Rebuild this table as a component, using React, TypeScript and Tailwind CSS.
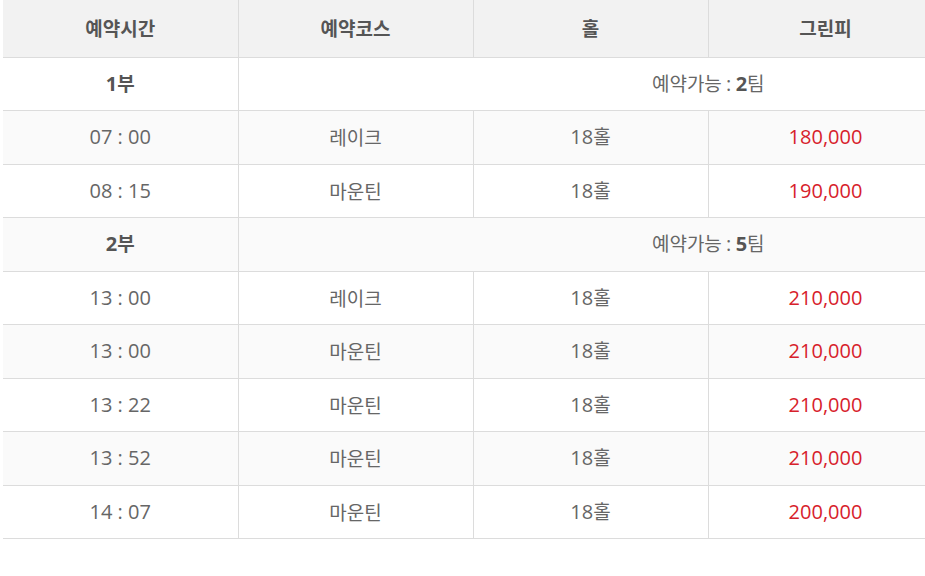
const rows: Array<
  | { kind: 'part'; label: string; teams: number }
  | { kind: 'slot'; time: string; course: string; hole: string; fee: string }
> = [
  { kind: 'part', label: '1', teams: 2 },
  { kind: 'slot', time: '07 : 00', course: '레이크', hole: '18', fee: '180,000' },
  { kind: 'slot', time: '08 : 15', course: '마운틴', hole: '18', fee: '190,000' },
  { kind: 'part', label: '2', teams: 5 },
  { kind: 'slot', time: '13 : 00', course: '레이크', hole: '18', fee: '210,000' },
  { kind: 'slot', time: '13 : 00', course: '마운틴', hole: '18', fee: '210,000' },
  { kind: 'slot', time: '13 : 22', course: '마운틴', hole: '18', fee: '210,000' },
  { kind: 'slot', time: '13 : 52', course: '마운틴', hole: '18', fee: '210,000' },
  { kind: 'slot', time: '14 : 07', course: '마운틴', hole: '18', fee: '200,000' },
];

// digits in the reference are set larger than the hangul
const num = "font-['Open_Sans',sans-serif] text-[20px]";

export default function App() {
  return (
    <div className="w-[925px] h-[576px] overflow-hidden bg-white font-['Noto_Sans_CJK_KR','Noto_Sans',sans-serif] text-[19px]">
      <table className="ml-[3px] w-[1175px] table-fixed border-collapse">
        <colgroup>
          <col className="w-[235px]" />
          <col className="w-[235px]" />
          <col className="w-[235px]" />
          <col className="w-[235px]" />
          <col className="w-[235px]" />
        </colgroup>
        <thead>
          <tr className="h-[57px] bg-[#f2f2f2] border-b border-[#dcdcdc]">
            {['예약시간', '예약코스', '홀', '그린피', ''].map((h, i) => (
              <th
                key={i}
                className={`font-bold text-[#555] text-center ${i > 0 ? 'border-l border-[#dcdcdc]' : ''}`}
              >
                {h}
              </th>
            ))}
          </tr>
        </thead>
        <tbody>
          {rows.map((r, i) => {
            const bg = i % 2 === 1 ? 'bg-[#fafafa]' : 'bg-white';
            if (r.kind === 'part') {
              return (
                <tr key={i} className={`h-[53.5px] border-b border-[#dcdcdc] ${bg}`}>
                  <td className="text-center font-bold text-[#555]">
                    <span className={num}>{r.label}</span>부
                  </td>
                  <td colSpan={4} className="text-center text-[#666] border-l border-[#dcdcdc]">
                    예약가능 <span className={num}>:</span>{' '}
                    <span className={`${num} font-bold text-[#555]`}>{r.teams}</span>팀
                  </td>
                </tr>
              );
            }
            return (
              <tr key={i} className={`h-[53.5px] border-b border-[#dcdcdc] ${bg}`}>
                <td className={`text-center text-[#666] ${num}`}>{r.time}</td>
                <td className="text-center text-[#666] border-l border-[#dcdcdc]">{r.course}</td>
                <td className="text-center text-[#666] border-l border-[#dcdcdc]">
                  <span className={num}>{r.hole}</span>홀
                </td>
                <td className={`text-center text-[#d7212b] border-l border-[#dcdcdc] ${num}`}>{r.fee}</td>
                <td className="border-l border-[#dcdcdc]"></td>
              </tr>
            );
          })}
        </tbody>
      </table>
    </div>
  );
}
